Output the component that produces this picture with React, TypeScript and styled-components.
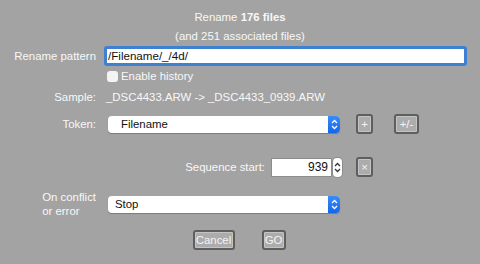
import React from "react";
import styled, { createGlobalStyle } from "styled-components";

const GlobalStyle = createGlobalStyle`
  html, body {
    margin: 0;
    background: #a3a3a3;
  }
  body {
    color: #f8f8f8;
    font-family: "Liberation Sans", Arial, sans-serif;
    font-size: 11.4px;
  }
`;

const Dialog = styled.main`
  width: 480px;
  height: 264px;
  display: flex;
  flex-direction: column;
`;

const Heading = styled.div<{ $top: number }>`
  margin-top: ${(p) => p.$top}px;
  line-height: 18px;
  text-align: center;
`;

const Row = styled.div<{ $top: number; $height: number }>`
  display: grid;
  grid-template-columns: 96px 1fr;
  column-gap: 8px;
  align-items: center;
  margin-top: ${(p) => p.$top}px;
  height: ${(p) => p.$height}px;
`;

const Label = styled.div`
  justify-self: end;
  line-height: 14px;
  white-space: nowrap;
`;

const Content = styled.div<{ $indent?: number }>`
  display: flex;
  align-items: center;
  padding-left: ${(p) => p.$indent || 0}px;
  height: 100%;
`;

const PatternInput = styled.div`
  box-sizing: border-box;
  width: 363px;
  height: 20px;
  border: 3px solid #3f80d2;
  border-radius: 3px;
  background: #ffffff;
  color: #111111;
  font-size: 11.6px;
  line-height: 14px;
  padding-left: 1px;
`;

const CheckBox = styled.span`
  display: inline-block;
  width: 11px;
  height: 11px;
  border-radius: 3px;
  background: #f4f4f4;
  margin-right: 3px;
`;

const Select = styled.div<{ $width: number; $pad: number }>`
  box-sizing: border-box;
  display: flex;
  align-items: center;
  width: ${(p) => p.$width}px;
  height: 17px;
  border-radius: 4px;
  background: #ffffff;
  box-shadow: 0 1px 1px rgba(0, 0, 0, 0.25);
  color: #111111;
  padding-left: ${(p) => p.$pad}px;
  overflow: hidden;
`;

const SelectText = styled.span`
  flex: 1;
`;

const BlueStepper = styled.span`
  display: flex;
  align-items: center;
  justify-content: center;
  width: 12px;
  height: 100%;
  background: linear-gradient(#3a8cf8, #1366ea);
`;

const ToolButton = styled.button<{ $width: number; $gap: number }>`
  box-sizing: border-box;
  width: ${(p) => p.$width}px;
  height: 20px;
  margin-left: ${(p) => p.$gap}px;
  padding: 0;
  border: 2px solid #5e5e5e;
  border-radius: 3px;
  background: #acacac;
  box-shadow: inset 0 0 0 1px #c4c4c4;
  color: #f4f4f4;
  font-family: inherit;
  font-size: 11.4px;
  line-height: 14px;
`;

const SeqRow = styled.div`
  display: flex;
  align-items: center;
  height: 20px;
  margin-top: 23px;
  padding-left: 104px;
`;

const SeqLabel = styled.span`
  width: 161px;
  text-align: right;
`;

const NumberField = styled.div`
  box-sizing: border-box;
  width: 59px;
  height: 17px;
  margin-left: 7px;
  padding-right: 3px;
  background: #ffffff;
  box-shadow: 0 0 0 1px #8c8c8c;
  color: #111111;
  font-size: 12px;
  line-height: 17px;
  text-align: right;
`;

const SmallStepper = styled.span`
  display: flex;
  align-items: center;
  justify-content: center;
  width: 9px;
  height: 19px;
  margin-left: 2px;
  border-radius: 4px;
  background: #ffffff;
  box-shadow: 0 0 0 1px #8c8c8c;
`;

const TwoLineLabel = styled.div`
  justify-self: end;
  line-height: 14px;
  text-align: left;
`;

const ButtonBar = styled.div`
  display: flex;
  justify-content: center;
  gap: 27px;
  margin-top: 12px;
  padding-right: 2px;
`;

function Chevrons({ color }: { color: string }) {
  return (
    <svg width="7" height="11" viewBox="0 0 7 11">
      <path
        d="M1 4 L3.5 1.5 L6 4 M1 7 L3.5 9.5 L6 7"
        fill="none"
        stroke={color}
        strokeWidth="1.3"
      />
    </svg>
  );
}

export default function App() {
  return (
    <>
      <GlobalStyle />
      <Dialog>
        <Heading $top={8}>
          Rename <b>176 files</b>
        </Heading>
        <Heading $top={1}>(and 251 associated files)</Heading>

        <Row $top={1} $height={20}>
          <Label>Rename pattern</Label>
          <Content>
            <PatternInput>/Filename/_/4d/</PatternInput>
          </Content>
        </Row>

        <Row $top={4} $height={12}>
          <span />
          <Content $indent={3}>
            <CheckBox />
            Enable history
          </Content>
        </Row>

        <Row $top={8} $height={14}>
          <Label>Sample:</Label>
          <Content $indent={2}>_DSC4433.ARW -&gt; _DSC4433_0939.ARW</Content>
        </Row>

        <Row $top={10} $height={20}>
          <Label>Token:</Label>
          <Content $indent={4}>
            <Select $width={232} $pad={13}>
              <SelectText>Filename</SelectText>
              <BlueStepper>
                <Chevrons color="#ffffff" />
              </BlueStepper>
            </Select>
            <ToolButton $width={17} $gap={16}>+</ToolButton>
            <ToolButton $width={25} $gap={21}>+/-</ToolButton>
          </Content>
        </Row>

        <SeqRow>
          <SeqLabel>Sequence start:</SeqLabel>
          <NumberField>939</NumberField>
          <SmallStepper>
            <Chevrons color="#333333" />
          </SmallStepper>
          <ToolButton $width={17} $gap={14}>×</ToolButton>
        </SeqRow>

        <Row $top={13} $height={28}>
          <TwoLineLabel>
            On conflict
            <br />
            or error
          </TwoLineLabel>
          <Content $indent={4}>
            <Select $width={232} $pad={7}>
              <SelectText>Stop</SelectText>
              <BlueStepper>
                <Chevrons color="#ffffff" />
              </BlueStepper>
            </Select>
          </Content>
        </Row>

        <ButtonBar>
          <ToolButton $width={42} $gap={0}>Cancel</ToolButton>
          <ToolButton $width={24} $gap={0}>GO</ToolButton>
        </ButtonBar>
      </Dialog>
    </>
  );
}
